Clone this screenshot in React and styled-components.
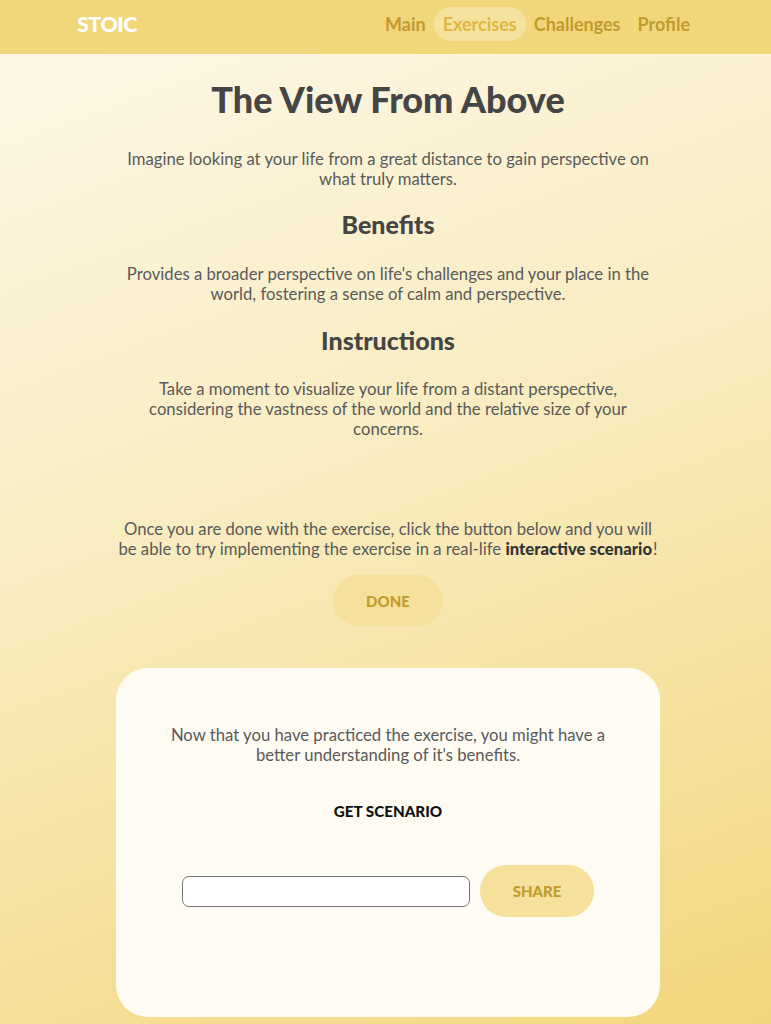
import React from "react";
import styled, { createGlobalStyle } from "styled-components";

const Global = createGlobalStyle`
  html, body { margin: 0; padding: 0; }
  body {
    font-family: "Lato", "Open Sans", sans-serif;
    min-height: 1024px;
    background: linear-gradient(160deg, #fdf8ea 0%, #f9ecc0 45%, #f3d67c 100%);
  }
`;

const NavBar = styled.header`
  height: 54px;
  box-sizing: border-box;
  background: #f2d67a;
  display: flex;
  align-items: center;
  justify-content: space-between;
  padding: 0 81px 2px 77px;
`;

const Logo = styled.div`
  color: #ffffff;
  font-weight: 900;
  font-size: 21.5px;
  letter-spacing: -0.5px;
  margin-top: -4px;
`;

const Links = styled.nav`
  display: flex;
  align-items: center;
  gap: 8px;
`;

const NavLink = styled.a`
  font-size: 18px;
  font-weight: 700;
  line-height: 22px;
  color: ${(p) => (p.$active ? "#e2b73e" : "#c29b2c")};
  background: ${(p) => (p.$active ? "#f5e29f" : "transparent")};
  padding: ${(p) => (p.$active ? "6px 9px" : "6px 0")};
  margin-left: ${(p) => (p.$gap ? "9px" : "0")};
  border-radius: 18px;
  text-decoration: none;
  transform: translateY(-2px);
`;

const Main = styled.main`
  width: 544px;
  margin: 0 auto;
  padding: 22px 0 7px 5px;
  display: flex;
  flex-direction: column;
  align-items: center;
  text-align: center;
  color: #555;
`;

const Title = styled.h1`
  margin: 0;
  font-size: 36px;
  font-weight: 900;
  color: #454545;
  line-height: 46px;
`;

const Heading = styled.h2`
  margin: ${(p) => p.$mt || "20px"} 0 0;
  font-size: 25px;
  font-weight: 900;
  color: #454545;
  line-height: 30px;
`;

const Para = styled.p`
  margin: ${(p) => p.$mt || "26px"} 0 0;
  font-size: 16.7px;
  font-weight: 400;
  line-height: 20px;
  color: #5a5a5a;
  width: ${(p) => p.$w || "100%"};
  b { font-weight: 900; color: #333; margin-right: 1px; }
`;

const PillButton = styled.button`
  border: none;
  background: #f5e19c;
  color: #c29b2c;
  font-family: inherit;
  font-weight: 900;
  font-size: 15px;
  width: ${(p) => p.$w || "110px"};
  height: ${(p) => p.$h || "51px"};
  border-radius: 26px;
  margin-top: ${(p) => p.$mt || "0"};
  flex-shrink: 0;
`;

const Card = styled.section`
  margin-top: 42px;
  width: 544px;
  height: 349px;
  box-sizing: border-box;
  background: #fefbf2;
  border-radius: 32px;
  padding-top: 57px;
  display: flex;
  flex-direction: column;
  align-items: center;
`;

const ScenarioLabel = styled.div`
  margin-top: 37px;
  font-size: 15.2px;
  font-weight: 900;
  color: #111;
`;

const ShareRow = styled.div`
  margin-top: 45px;
  display: flex;
  align-items: center;
  gap: 10px;
`;

const Input = styled.input`
  width: 288px;
  height: 31px;
  box-sizing: border-box;
  border: 1px solid #767676;
  border-radius: 7px;
  background: #fff;
`;

export default function App() {
  return (
    <>
      <Global />
      <NavBar>
        <Logo>STOIC</Logo>
        <Links>
          <NavLink>Main</NavLink>
          <NavLink $active>Exercises</NavLink>
          <NavLink>Challenges</NavLink>
          <NavLink $gap>Profile</NavLink>
        </Links>
      </NavBar>
      <Main>
        <Title>The View From Above</Title>
        <Para $mt="27px" $w="530px">
          Imagine looking at your life from a great distance to gain perspective on what truly matters.
        </Para>
        <Heading $mt="20px">Benefits</Heading>
        <Para $mt="25px" $w="535px">
          Provides a broader perspective on life's challenges and your place in the world, fostering a sense of calm and perspective.
        </Para>
        <Heading $mt="21px">Instructions</Heading>
        <Para $mt="24px" $w="485px">
          Take a moment to visualize your life from a distant perspective, considering the vastness of the world and the relative size of your concerns.
        </Para>
        <Para $mt="80px">
          Once you are done with the exercise, click the button below and you will be able to try implementing the exercise in a real-life <b>interactive scenario</b>!
        </Para>
        <PillButton $mt="16px">DONE</PillButton>
        <Card>
          <Para $mt="0" $w="440px">
            Now that you have practiced the exercise, you might have a better understanding of it's benefits.
          </Para>
          <ScenarioLabel>GET SCENARIO</ScenarioLabel>
          <ShareRow>
            <Input type="text" />
            <PillButton $w="114px" $h="52px">SHARE</PillButton>
          </ShareRow>
        </Card>
      </Main>
    </>
  );
}
